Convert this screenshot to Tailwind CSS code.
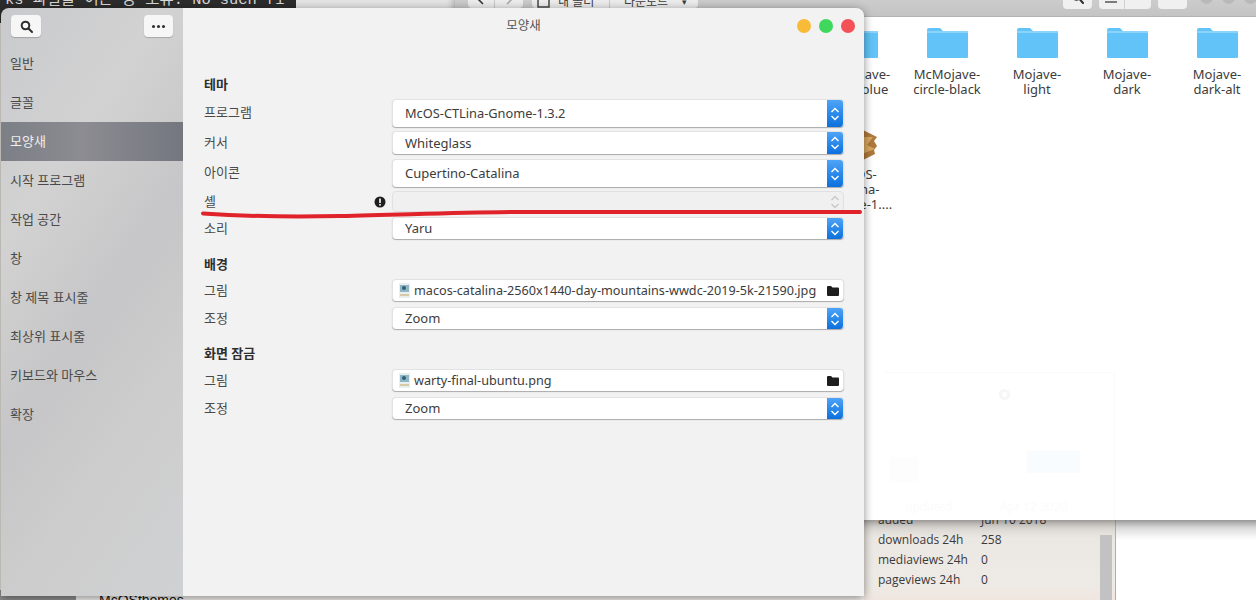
<!DOCTYPE html>
<html lang="ko">
<head>
<meta charset="utf-8">
<script src="https://cdn.jsdelivr.net/npm/@tailwindcss/browser@4"></script>
</head>
<body class="m-0">
<div class="relative w-[1256px] h-[600px] overflow-hidden bg-[#ece7e2] font-['Noto_Sans','Noto_Sans_CJK_KR',sans-serif] text-[13px] text-[#3d3d3d]">

  <!-- terminal behind -->
  <div class="absolute left-0 top-0 w-[296px] h-[30px] bg-[#2c2c2c] font-['Liberation_Mono','Noto_Sans_CJK_KR',monospace] text-[15.4px] leading-[14px] text-[#d8d8d8] whitespace-nowrap -mt-[7px] pl-[5px]">ks 파일을 여는 중 오류: No such fi</div>
  <div class="absolute left-[296px] top-0 w-[160px] h-[20px] bg-[#e4e4e4]"></div>

  <!-- bottom-left leftovers -->
  <div class="absolute left-0 top-[590px] w-[76px] h-[10px] bg-[#8e8e8e]"></div>
  <div class="absolute left-[76px] top-[590px] w-[790px] h-[10px] bg-[#f4f2f0]"></div>
  <div class="absolute left-[99px] top-[590px] text-[14px] leading-[20px] text-[#111] font-['Liberation_Sans',sans-serif]">McOSthemes</div>

  <!-- web page behind the file manager -->
  <div class="absolute left-[864px] top-[500px] w-[251px] h-[100px] bg-[linear-gradient(180deg,#cfcbc8_20px,#ebe7e2_38px,#eeeae5_85%,#f0e6e0_100%)] font-['Open_Sans',sans-serif] text-[12px] text-[#3a3a3a]">
    <div class="grid grid-cols-[103px_1fr] pl-[14px] pt-[10px] auto-rows-[20px] leading-[20px]">
      <span>added</span><span>Jun 10 2018</span>
      <span>downloads 24h</span><span>258</span>
      <span>mediaviews 24h</span><span>0</span>
      <span>pageviews 24h</span><span>0</span>
    </div>
    <div class="absolute left-[236px] top-[35px] w-[12px] h-[65px] bg-[#c2c2c2]"></div>
  </div>
  <div class="absolute left-[1115px] top-[520px] w-[141px] h-[80px] bg-white border-l-[1px] border-[#b9a6b2]">
    <div class="h-[20px] bg-[linear-gradient(180deg,#c8c8c8,#ffffff)]"></div>
  </div>

  <!-- file manager window -->
  <div class="absolute left-[455px] top-[-20px] w-[820px] h-[540px] bg-white shadow-[0_2px_8px_rgba(0,0,0,0.35)] flex flex-col">
    <div class="h-[37px] shrink-0 bg-[linear-gradient(180deg,#d6d6d6,#c4c4c4)] border-b border-[#b4b4b4] flex items-start pt-[2px] pl-[13px] gap-[9px]">
      <div class="flex h-[26px] rounded-[4px] bg-[#ececec] overflow-hidden items-end">
        <div class="w-[27px] h-full border-r border-[#c8c8c8] flex items-end justify-center pb-[2px]">
          <svg width="8" height="10" viewBox="0 0 8 10" fill="none" stroke="#333" stroke-width="1.600"><path d="M6 0 2 4 6 8"/></svg>
        </div>
        <div class="w-[28px] h-full flex items-end justify-center pb-[2px]">
          <svg width="8" height="10" viewBox="0 0 8 10" fill="none" stroke="#aaa" stroke-width="1.600"><path d="M2 0 6 4 2 8"/></svg>
        </div>
      </div>
      <div class="flex h-[26px] rounded-[4px] bg-[#ececec] text-[12px] overflow-hidden">
        <div class="w-[78px] h-full border-r border-[#c8c8c8] flex pl-[5px] gap-[8px] leading-[40px]">
          <svg width="13" height="12" viewBox="0 0 13 12" class="mt-[14px] shrink-0" fill="none" stroke="#444" stroke-width="1.500"><rect x="1" y="1" width="11" height="10"/></svg>
          <span class="whitespace-nowrap">내 폴더</span>
        </div>
        <div class="w-[88px] h-full flex pl-[14px] gap-[14px] leading-[40px] whitespace-nowrap">
          <span>다운로드</span><span class="text-[9px]">▾</span>
        </div>
      </div>
      <div class="ml-auto flex items-start gap-[7px] pr-[18.5px]">
        <div class="w-[29px] h-[27px] rounded-[4px] bg-[#f0f0f0] flex items-end justify-center pb-[3px]">
          <svg width="13" height="13" viewBox="0 0 13 13" fill="none" stroke="#2e2e2e" stroke-width="2"><circle cx="5.500" cy="3" r="3.800"/><path d="M8.500 6 12 10" stroke-linecap="round"/></svg>
        </div>
        <div class="w-[52px] h-[27px] rounded-[4px] bg-[#f0f0f0] flex">
          <div class="w-[26px] h-full border-r border-[#d0d0d0] flex items-end justify-center pb-[4px]">
            <svg width="12" height="8" viewBox="0 0 12 8" stroke="#555" stroke-width="1.300"><path d="M0 1h12M0 5h12"/></svg>
          </div>
        </div>
        <div class="w-[29px] h-[27px] rounded-[4px] bg-[#f0f0f0]"></div>
        <div class="w-[13px] h-[13px] mt-[9px] ml-[6px] rounded-full bg-[#b9b9b9]"></div>
        <div class="w-[13px] h-[13px] mt-[9px] ml-[2px] rounded-full bg-[#b9b9b9]"></div>
        <div class="w-[13px] h-[13px] mt-[9px] ml-[2px] rounded-full bg-[#b9b9b9]"></div>
      </div>
    </div>

    <!-- folder grid -->
    <div class="relative flex-1">
      <div class="absolute left-[357px] top-[10px] grid grid-cols-[90px_90px_90px_90px_90px] text-center leading-[15px] text-[13px] text-[#3c3c3c]">
        <div class="flex flex-col items-center gap-[8px]">
          <svg width="41" height="32" viewBox="0 0 41 32"><path d="M0 3q0-2 2-2h11l3 3h23q2 0 2 2v24q0 1-1 1H1q-1 0-1-1z" fill="#62c3f8"/><rect y="4" width="41" height="2" fill="#8bd3fa"/></svg>
          <span>McMojave-<br>circle-blue</span>
        </div>
        <div class="flex flex-col items-center gap-[8px]">
          <svg width="41" height="32" viewBox="0 0 41 32"><path d="M0 3q0-2 2-2h11l3 3h23q2 0 2 2v24q0 1-1 1H1q-1 0-1-1z" fill="#62c3f8"/><rect y="4" width="41" height="2" fill="#8bd3fa"/></svg>
          <span>McMojave-<br>circle-black</span>
        </div>
        <div class="flex flex-col items-center gap-[8px]">
          <svg width="41" height="32" viewBox="0 0 41 32"><path d="M0 3q0-2 2-2h11l3 3h23q2 0 2 2v24q0 1-1 1H1q-1 0-1-1z" fill="#62c3f8"/><rect y="4" width="41" height="2" fill="#8bd3fa"/></svg>
          <span>Mojave-<br>light</span>
        </div>
        <div class="flex flex-col items-center gap-[8px]">
          <svg width="41" height="32" viewBox="0 0 41 32"><path d="M0 3q0-2 2-2h11l3 3h23q2 0 2 2v24q0 1-1 1H1q-1 0-1-1z" fill="#62c3f8"/><rect y="4" width="41" height="2" fill="#8bd3fa"/></svg>
          <span>Mojave-<br>dark</span>
        </div>
        <div class="flex flex-col items-center gap-[8px]">
          <svg width="41" height="32" viewBox="0 0 41 32"><path d="M0 3q0-2 2-2h11l3 3h23q2 0 2 2v24q0 1-1 1H1q-1 0-1-1z" fill="#62c3f8"/><rect y="4" width="41" height="2" fill="#8bd3fa"/></svg>
          <span>Mojave-<br>dark-alt</span>
        </div>
        <div class="flex flex-col items-center col-start-1 mt-[30px] gap-[4px]">
          <svg width="44" height="36" viewBox="0 0 44 36"><path d="M2 8 22 0l20 10-3 4 3 5-3 4 1 4-18 9-20-9z" fill="#b07a3c"/><path d="M22 10l16 0-6 8 8 4-16 6z" fill="#d9a860"/></svg>
          <span>McOS-<br>CTLina-<br>Gnome-1....</span>
        </div>
      </div>

      <!-- ghosted overlay still fading out -->
      <div class="absolute left-[430px] top-[355px] w-[230px] h-[148px] border-t border-r border-[#fafafa] text-[12px] text-[#fbfbfb]">
        <div class="absolute left-[114px] top-[16px] w-[11px] h-[11px] rounded-full border-[3px] border-[#f6f6f6]"></div>
        <div class="absolute left-[142px] top-[78px] w-[53px] h-[22px] bg-[#f8fcff]"></div>
        <div class="absolute left-[4px] top-[84px] w-[30px] h-[26px] bg-[#fdfdfd]"></div>
        <div class="absolute left-[20px] top-[125px]">updated</div>
        <div class="absolute left-[115px] top-[125px]">Apr 12 2020</div>
      </div>
    </div>
  </div>

  <!-- settings window -->
  <div class="absolute left-[1px] top-[8px] w-[863px] h-[588px] rounded-t-[8px] overflow-hidden flex shadow-[0_2px_10px_rgba(0,0,0,0.45)]">
    <!-- sidebar -->
    <aside class="w-[182px] shrink-0 bg-[linear-gradient(125deg,#c9cacd_0%,#d2d2d2_28%,#c6c6c8_52%,#cdcdcd_72%,#d0d1d3_100%)] flex flex-col text-[#4a4a4a]">
      <div class="h-[36px] shrink-0 flex items-start justify-between pt-[7px] px-[10px]">
        <div class="w-[30px] h-[22px] rounded-[4px] bg-[#f6f6f6] shadow-[0_1px_1px_rgba(0,0,0,0.2)] flex items-center justify-center">
          <svg width="13" height="13" viewBox="0 0 13 13" fill="none" stroke="#2e2e2e" stroke-width="2"><circle cx="5.5" cy="5.5" r="3.8"/><path d="M8.5 8.5 12 12" stroke-linecap="round"/></svg>
        </div>
        <div class="w-[29px] h-[22px] rounded-[4px] bg-[#f6f6f6] shadow-[0_1px_1px_rgba(0,0,0,0.2)] flex items-center justify-center gap-[2px]">
          <span class="w-[3px] h-[3px] rounded-full bg-[#2e2e2e]"></span><span class="w-[3px] h-[3px] rounded-full bg-[#2e2e2e]"></span><span class="w-[3px] h-[3px] rounded-full bg-[#2e2e2e]"></span>
        </div>
      </div>
      <nav class="flex flex-col">
        <div class="h-[39px] leading-[39px] pl-[9px]">일반</div>
        <div class="h-[39px] leading-[39px] pl-[9px]">글꼴</div>
        <div class="h-[39px] leading-[39px] pl-[9px] text-[#f0f0f0] bg-[linear-gradient(90deg,#7c7f86,#8c8c92_45%,#74777f)]">모양새</div>
        <div class="h-[39px] leading-[39px] pl-[9px]">시작 프로그램</div>
        <div class="h-[39px] leading-[39px] pl-[9px]">작업 공간</div>
        <div class="h-[39px] leading-[39px] pl-[9px]">창</div>
        <div class="h-[39px] leading-[39px] pl-[9px]">창 제목 표시줄</div>
        <div class="h-[39px] leading-[39px] pl-[9px]">최상위 표시줄</div>
        <div class="h-[39px] leading-[39px] pl-[9px]">키보드와 마우스</div>
        <div class="h-[39px] leading-[39px] pl-[9px]">확장</div>
      </nav>
    </aside>

    <!-- main -->
    <main class="flex-1 min-w-0 bg-[#f2f2f2] flex flex-col text-[#4a4a4a]">
      <header class="relative h-[36px] shrink-0 flex items-center justify-center text-[#555]">
        <span class="text-[12.5px]">모양새</span>
        <div class="absolute right-[9px] top-[11px] flex gap-[8px]">
          <span class="w-[14px] h-[14px] rounded-full bg-[#f8bb38]"></span>
          <span class="w-[14px] h-[14px] rounded-full bg-[#3fd85c]"></span>
          <span class="w-[14px] h-[14px] rounded-full bg-[#f35058]"></span>
        </div>
      </header>

      <div class="pl-[21px] pr-[20px] pt-[30px] flex flex-col">
        <div class="h-[20px] leading-[20px] font-bold text-[#2e2e2e]">테마</div>

        <div class="mt-[5px] h-[28px] flex items-center">
          <span class="w-[188px] shrink-0">프로그램</span>
          <div class="flex-1 min-w-0 h-full flex bg-white rounded-[4px] shadow-[0_1px_1px_rgba(0,0,0,0.3)] border-t border-x border-[#e2e2e2] overflow-hidden">
            <span class="flex-1 pl-[12px] leading-[27px] text-[12.8px] text-[#3c3c3c]">McOS-CTLina-Gnome-1.3.2</span>
            <span class="w-[16px] bg-[linear-gradient(180deg,#4ea4f7,#0c70dc)] flex items-center justify-center">
              <svg width="10" height="16" viewBox="0 0 10 16" fill="none" stroke="#fff" stroke-width="1.4"><path d="M1.5 6 5 2.5 8.500 6M1.500 10 5 13.500 8.500 10"/></svg>
            </span>
          </div>
        </div>

        <div class="mt-[4px] h-[23px] flex items-center">
          <span class="w-[188px] shrink-0">커서</span>
          <div class="flex-1 min-w-0 h-full flex bg-white rounded-[4px] shadow-[0_1px_1px_rgba(0,0,0,0.3)] border-t border-x border-[#e2e2e2] overflow-hidden">
            <span class="flex-1 pl-[12px] leading-[22px] text-[#3c3c3c]">Whiteglass</span>
            <span class="w-[16px] bg-[linear-gradient(180deg,#4ea4f7,#0c70dc)] flex items-center justify-center">
              <svg width="10" height="16" viewBox="0 0 10 16" fill="none" stroke="#fff" stroke-width="1.4"><path d="M1.5 6 5 2.5 8.500 6M1.500 10 5 13.500 8.500 10"/></svg>
            </span>
          </div>
        </div>

        <div class="mt-[5px] h-[28px] flex items-center">
          <span class="w-[188px] shrink-0">아이콘</span>
          <div class="flex-1 min-w-0 h-full flex bg-white rounded-[4px] shadow-[0_1px_1px_rgba(0,0,0,0.3)] border-t border-x border-[#e2e2e2] overflow-hidden">
            <span class="flex-1 pl-[12px] leading-[27px] text-[#3c3c3c]">Cupertino-Catalina</span>
            <span class="w-[16px] bg-[linear-gradient(180deg,#4ea4f7,#0c70dc)] flex items-center justify-center">
              <svg width="10" height="16" viewBox="0 0 10 16" fill="none" stroke="#fff" stroke-width="1.4"><path d="M1.5 6 5 2.5 8.500 6M1.500 10 5 13.500 8.500 10"/></svg>
            </span>
          </div>
        </div>

        <div class="mt-[4px] h-[21px] flex items-center">
          <span class="w-[170px] shrink-0">셸</span>
          <span class="w-[18px] shrink-0 flex">
            <svg width="12" height="12" viewBox="0 0 12 12"><circle cx="6" cy="6" r="5.500" fill="#1e1e1e"/><rect x="5.200" y="2.500" width="1.600" height="4.500" fill="#fff"/><rect x="5.200" y="8" width="1.600" height="1.600" fill="#fff"/></svg>
          </span>
          <div class="flex-1 min-w-0 h-full flex justify-end items-center bg-[#f0f0f0] rounded-[4px] border border-[#e0e0e0] pr-[3px]">
            <svg width="10" height="16" viewBox="0 0 10 16" fill="none" stroke="#c8c8c8" stroke-width="1.400"><path d="M1.500 6 5 2.500 8.500 6M1.500 10 5 13.500 8.500 10"/></svg>
          </div>
        </div>

        <div class="mt-[5px] h-[22px] flex items-center">
          <span class="w-[188px] shrink-0 pt-[1px]">소리</span>
          <div class="flex-1 min-w-0 h-full flex bg-white rounded-[4px] shadow-[0_1px_1px_rgba(0,0,0,0.3)] border-t border-x border-[#e2e2e2] overflow-hidden">
            <span class="flex-1 pl-[12px] leading-[21px] text-[#3c3c3c]">Yaru</span>
            <span class="w-[16px] bg-[linear-gradient(180deg,#4ea4f7,#0c70dc)] flex items-center justify-center">
              <svg width="10" height="16" viewBox="0 0 10 16" fill="none" stroke="#fff" stroke-width="1.4"><path d="M1.5 6 5 2.5 8.500 6M1.500 10 5 13.500 8.500 10"/></svg>
            </span>
          </div>
        </div>

        <div class="mt-[15px] h-[20px] leading-[20px] font-bold text-[#2e2e2e]">배경</div>

        <div class="mt-[5px] h-[22px] flex items-center">
          <span class="w-[188px] shrink-0 pt-[1px]">그림</span>
          <div class="flex-1 min-w-0 h-full flex items-center bg-white rounded-[4px] shadow-[0_1px_1px_rgba(0,0,0,0.3)] border-t border-x border-[#e2e2e2] pl-[5px] pr-[4px]">
            <svg width="13" height="15" viewBox="0 0 13 15" class="shrink-0"><rect x="1" y="0" width="11" height="15" fill="#e9efee"/><rect x="2" y="2" width="9" height="7" fill="#8fb6c2"/><circle cx="6" cy="5" r="2" fill="#31607a"/><rect x="2" y="11" width="9" height="2" fill="#d8c9a8"/></svg>
            <span class="ml-[3px] flex-1 min-w-0 text-[12.65px] text-[#3c3c3c] whitespace-nowrap">macos-catalina-2560x1440-day-mountains-wwdc-2019-5k-21590.jpg</span>
            <svg width="12" height="10" viewBox="0 0 12 10" class="shrink-0"><path d="M0 1q0-1 1-1h3l1.500 1.500H11q1 0 1 1V9q0 1-1 1H1q-1 0-1-1z" fill="#1e1e1e"/></svg>
          </div>
        </div>

        <div class="mt-[6px] h-[22px] flex items-center">
          <span class="w-[188px] shrink-0 pt-[1px]">조정</span>
          <div class="flex-1 min-w-0 h-full flex bg-white rounded-[4px] shadow-[0_1px_1px_rgba(0,0,0,0.3)] border-t border-x border-[#e2e2e2] overflow-hidden">
            <span class="flex-1 pl-[12px] leading-[21px] text-[#3c3c3c]">Zoom</span>
            <span class="w-[16px] bg-[linear-gradient(180deg,#4ea4f7,#0c70dc)] flex items-center justify-center">
              <svg width="10" height="16" viewBox="0 0 10 16" fill="none" stroke="#fff" stroke-width="1.4"><path d="M1.5 6 5 2.5 8.500 6M1.500 10 5 13.500 8.500 10"/></svg>
            </span>
          </div>
        </div>

        <div class="mt-[14px] h-[20px] leading-[20px] font-bold text-[#2e2e2e]">화면 잠금</div>

        <div class="mt-[6px] h-[22px] flex items-center">
          <span class="w-[188px] shrink-0 pt-[1px]">그림</span>
          <div class="flex-1 min-w-0 h-full flex items-center bg-white rounded-[4px] shadow-[0_1px_1px_rgba(0,0,0,0.3)] border-t border-x border-[#e2e2e2] pl-[5px] pr-[4px]">
            <svg width="13" height="15" viewBox="0 0 13 15" class="shrink-0"><rect x="1" y="0" width="11" height="15" fill="#e9efee"/><rect x="2" y="2" width="9" height="7" fill="#8fb6c2"/><circle cx="6" cy="5" r="2" fill="#31607a"/><rect x="2" y="11" width="9" height="2" fill="#d8c9a8"/></svg>
            <span class="ml-[3px] flex-1 min-w-0 text-[12.65px] text-[#3c3c3c]">warty-final-ubuntu.png</span>
            <svg width="12" height="10" viewBox="0 0 12 10" class="shrink-0"><path d="M0 1q0-1 1-1h3l1.500 1.500H11q1 0 1 1V9q0 1-1 1H1q-1 0-1-1z" fill="#1e1e1e"/></svg>
          </div>
        </div>

        <div class="mt-[6px] h-[22px] flex items-center">
          <span class="w-[188px] shrink-0 pt-[1px]">조정</span>
          <div class="flex-1 min-w-0 h-full flex bg-white rounded-[4px] shadow-[0_1px_1px_rgba(0,0,0,0.3)] border-t border-x border-[#e2e2e2] overflow-hidden">
            <span class="flex-1 pl-[12px] leading-[21px] text-[#3c3c3c]">Zoom</span>
            <span class="w-[16px] bg-[linear-gradient(180deg,#4ea4f7,#0c70dc)] flex items-center justify-center">
              <svg width="10" height="16" viewBox="0 0 10 16" fill="none" stroke="#fff" stroke-width="1.4"><path d="M1.5 6 5 2.5 8.500 6M1.500 10 5 13.500 8.500 10"/></svg>
            </span>
          </div>
        </div>
      </div>
    </main>
  </div>

  <!-- red annotation stroke -->
  <svg class="absolute left-0 top-0 pointer-events-none" width="1256" height="600" viewBox="0 0 1256 600" fill="none">
    <path d="M203 213.500C240 216 290 217 340 216C400 215 450 212.500 520 212L860 212" stroke="#e0222a" stroke-width="4" stroke-linecap="round"/>
  </svg>
</div>
</body>
</html>
